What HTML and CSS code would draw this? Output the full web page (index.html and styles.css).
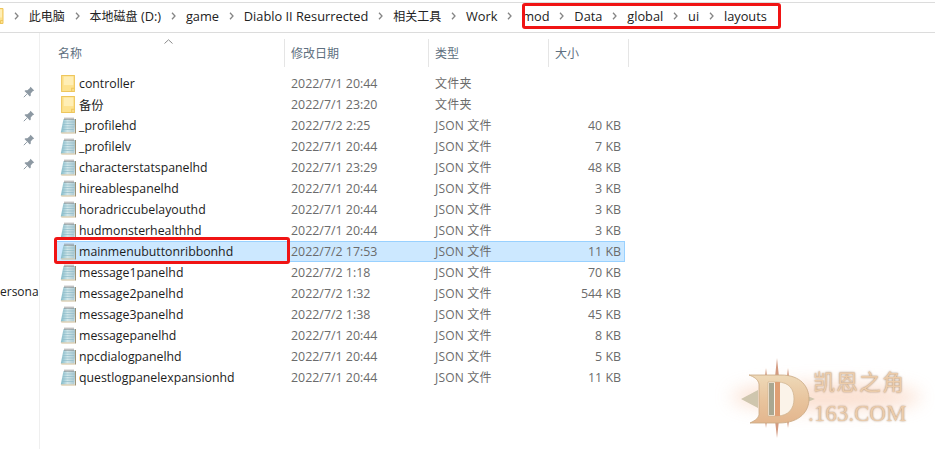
FILE: index.html
```html
<!DOCTYPE html>
<html lang="zh">
<head>
<meta charset="utf-8">
<title>layouts</title>
<link rel="stylesheet" href="styles.css">
</head>
<body>
<svg class="defs" width="0" height="0">
  <defs>
    <linearGradient id="pg" x1="0" y1="0" x2="1" y2="0">
      <stop offset="0" stop-color="#7fb9c8"/><stop offset="0.45" stop-color="#cfe6ea"/><stop offset="1" stop-color="#a9c6cf"/>
    </linearGradient>
    <linearGradient id="dg" x1="0" y1="0" x2="0" y2="1">
      <stop offset="0" stop-color="#eed9b8"/><stop offset="0.55" stop-color="#e8c39c"/><stop offset="1" stop-color="#e3b68e"/>
    </linearGradient>
    <symbol id="folder" viewBox="0 0 14 16">
      <path d="M1 .5h12v15H1z" fill="#fde28f" stroke="#eec65c"/>
      <path d="M3 1.500h9v8H3z" fill="#ffeeb5"/>
      <path d="M10.500 15.500v-3h2.500" fill="none" stroke="#eec65c"/>
    </symbol>
    <symbol id="note" viewBox="0 0 16 17">
      <path d="M3.500 2h12L14.500 15.500H.8z" fill="url(#pg)"/>
      <path d="M3.200 5h11.500M2.900 7.500h11.500M2.500 10h11.500M2.200 12.500h11.500" stroke="#8fbcc8" stroke-width=".7"/>
      <path d="M.8 15.500H15l-.2 1H1.500z" fill="#cdbb93"/>
      <path d="M5 .6v2.400M7 .6v2.400M9 .6v2.400M11 .6v2.400M13 .6v2.400" stroke="#777" stroke-width=".9"/>
      <path d="M15.500 2v14.500" stroke="#857653" stroke-width=".8"/>
    </symbol>
    <symbol id="pin" viewBox="0 0 12 12">
      <path d="M7.500.8l3.700 3.700-1.500.8-2 2.300.1 2L6.900 10.500 1.500 5.100 2.400 4.200l2 .1 2.300-2z" fill="#8d99a3"/>
      <path d="M3.800 8.200L.8 11.200" stroke="#8d99a3"/>
    </symbol>
    <symbol id="chev" viewBox="0 0 5 8">
      <path d="M1 .8L4 4 1 7.200" fill="none" stroke="#858585" stroke-width="1.300"/>
    </symbol>
  </defs>
</svg>

<div class="page">
  <nav class="crumbs">
    <svg class="crumb-folder"><use href="#folder"/></svg>
    <svg class="chev"><use href="#chev"/></svg><span class="cjk">此电脑</span>
    <svg class="chev"><use href="#chev"/></svg><span><span class="cjk">本地磁盘</span> (D:)</span>
    <svg class="chev"><use href="#chev"/></svg><span>game</span>
    <svg class="chev"><use href="#chev"/></svg><span>Diablo II Resurrected</span>
    <svg class="chev"><use href="#chev"/></svg><span class="cjk">相关工具</span>
    <svg class="chev"><use href="#chev"/></svg><span>Work</span>
    <svg class="chev"><use href="#chev"/></svg><span>mod</span>
    <svg class="chev"><use href="#chev"/></svg><span>Data</span>
    <svg class="chev"><use href="#chev"/></svg><span>global</span>
    <svg class="chev"><use href="#chev"/></svg><span>ui</span>
    <svg class="chev"><use href="#chev"/></svg><span>layouts</span>
  </nav>

  <div class="body">
    <aside class="side">
      <svg class="pin"><use href="#pin"/></svg>
      <svg class="pin"><use href="#pin"/></svg>
      <svg class="pin"><use href="#pin"/></svg>
      <svg class="pin"><use href="#pin"/></svg>
      <span class="side-label">ersona</span>
    </aside>

    <main class="list">
      <div class="head">
        <div class="hc c-name">名称<svg class="sort" viewBox="0 0 9 5"><path d="M.5 4.500L4.500 .8l4 3.700" fill="none" stroke="#8a8a8a"/></svg></div>
        <div class="hc c-date">修改日期</div>
        <div class="hc c-type">类型</div>
        <div class="hc c-size">大小</div>
      </div>

      <div class="row"><div class="c-name name"><svg class="ico"><use href="#folder"/></svg>controller</div><div class="c-date">2022/7/1 20:44</div><div class="c-type">文件夹</div><div class="c-size"></div></div>
      <div class="row"><div class="c-name name"><svg class="ico"><use href="#folder"/></svg>备份</div><div class="c-date">2022/7/1 23:20</div><div class="c-type">文件夹</div><div class="c-size"></div></div>
      <div class="row"><div class="c-name name"><svg class="ico"><use href="#note"/></svg>_profilehd</div><div class="c-date">2022/7/2 2:25</div><div class="c-type">JSON 文件</div><div class="c-size">40 KB</div></div>
      <div class="row"><div class="c-name name"><svg class="ico"><use href="#note"/></svg>_profilelv</div><div class="c-date">2022/7/1 20:44</div><div class="c-type">JSON 文件</div><div class="c-size">7 KB</div></div>
      <div class="row"><div class="c-name name"><svg class="ico"><use href="#note"/></svg>characterstatspanelhd</div><div class="c-date">2022/7/1 23:29</div><div class="c-type">JSON 文件</div><div class="c-size">48 KB</div></div>
      <div class="row"><div class="c-name name"><svg class="ico"><use href="#note"/></svg>hireablespanelhd</div><div class="c-date">2022/7/1 20:44</div><div class="c-type">JSON 文件</div><div class="c-size">3 KB</div></div>
      <div class="row"><div class="c-name name"><svg class="ico"><use href="#note"/></svg>horadriccubelayouthd</div><div class="c-date">2022/7/1 20:44</div><div class="c-type">JSON 文件</div><div class="c-size">3 KB</div></div>
      <div class="row"><div class="c-name name"><svg class="ico"><use href="#note"/></svg>hudmonsterhealthhd</div><div class="c-date">2022/7/1 20:44</div><div class="c-type">JSON 文件</div><div class="c-size">3 KB</div></div>
      <div class="row selected"><div class="c-name name"><svg class="ico"><use href="#note"/></svg>mainmenubuttonribbonhd</div><div class="c-date">2022/7/2 17:53</div><div class="c-type">JSON 文件</div><div class="c-size">11 KB</div></div>
      <div class="row"><div class="c-name name"><svg class="ico"><use href="#note"/></svg>message1panelhd</div><div class="c-date">2022/7/2 1:18</div><div class="c-type">JSON 文件</div><div class="c-size">70 KB</div></div>
      <div class="row"><div class="c-name name"><svg class="ico"><use href="#note"/></svg>message2panelhd</div><div class="c-date">2022/7/2 1:32</div><div class="c-type">JSON 文件</div><div class="c-size">544 KB</div></div>
      <div class="row"><div class="c-name name"><svg class="ico"><use href="#note"/></svg>message3panelhd</div><div class="c-date">2022/7/2 1:38</div><div class="c-type">JSON 文件</div><div class="c-size">45 KB</div></div>
      <div class="row"><div class="c-name name"><svg class="ico"><use href="#note"/></svg>messagepanelhd</div><div class="c-date">2022/7/1 20:44</div><div class="c-type">JSON 文件</div><div class="c-size">8 KB</div></div>
      <div class="row"><div class="c-name name"><svg class="ico"><use href="#note"/></svg>npcdialogpanelhd</div><div class="c-date">2022/7/1 20:44</div><div class="c-type">JSON 文件</div><div class="c-size">5 KB</div></div>
      <div class="row"><div class="c-name name"><svg class="ico"><use href="#note"/></svg>questlogpanelexpansionhd</div><div class="c-date">2022/7/1 20:44</div><div class="c-type">JSON 文件</div><div class="c-size">11 KB</div></div>
    </main>
  </div>

  <div class="mark mark-crumbs"></div>
  <div class="mark mark-row"></div>

  <div class="wm">
    <div class="wm-glow"></div>
    <svg class="wm-d" viewBox="0 0 74 80">
      <path d="M36 0l2.500 24h-5zM25 10l2 16h-4zM47 10l-2 16h4zM36 80l2.500-22h-5zM25 70l2-14h-4zM47 70l-2-14h4z" fill="#d39a80"/>
      <path d="M0 41l17-9v18zM74 41l-15-6v12z" fill="#cfc6ae"/>
      <path d="M8 17h32c20 0 28 12 28 24s-9 24-30 24H9c4-2 8-4 9-8V26c-1-5-5-7-10-9z" fill="url(#dg)" stroke="#c9a883" stroke-width=".8"/>
      <path d="M27 24h9c13 0 17 8 17 17s-5 17-17 17h-9z" fill="#fbf3e9" stroke="#d0b592" stroke-width=".8"/>
      <path d="M34 24h5v34h-5z" fill="#df9f74"/>
      <path d="M28 25h5v32h-5z" fill="#aaa791"/>
    </svg>
    <div class="wm-text">
      <div class="wm-cn">凯恩之角</div>
      <div class="wm-en">.163.COM</div>
    </div>
  </div>
</div>
</body>
</html>
```

FILE: styles.css
```css
* { box-sizing: border-box; }
html, body { margin: 0; padding: 0; background: #fff; }
body {
  width: 935px;
  height: 449px;
  overflow: hidden;
  font-family: "Open Sans", "Noto Sans CJK SC", sans-serif;
  font-size: 12px;
  color: #1c1c1c;
}
.defs { position: absolute; }
.page { position: relative; width: 935px; height: 449px; overflow: hidden; }

/* breadcrumb */
.crumbs {
  display: flex;
  align-items: center;
  gap: 9.900px;
  height: 31px;
  margin-top: 2px;
  padding-bottom: 4px;
  border-top: 1px solid #dcdcdc;
  border-bottom: 1px solid #dcdcdc;
  white-space: nowrap;
  font-size: 12.800px;
  color: #222;
}
.cjk { font-size: 12px; }
.crumb-folder { width: 14px; height: 16px; margin-left: -10px; flex: none; }
.chev { width: 5px; height: 8px; flex: none; }

/* main area */
.body { display: flex; height: 416px; }
.side {
  position: relative;
  width: 40px;
  flex: none;
  border-right: 1px solid #efefef;
  padding-top: 53px;
  padding-left: 23px;
  display: flex;
  flex-direction: column;
  gap: 12px;
}
.pin { width: 12px; height: 12px; flex: none; }
.side-label { position: absolute; left: 0; top: 250px; font-size: 12px; line-height: 18px; color: #222; }

.list { width: 590px; padding-left: 15px; padding-top: 6px; }
.head { display: flex; width: 574px; height: 28px; color: #5e6f80; }
.hc {
  position: relative;
  flex: none;
  display: flex;
  align-items: center;
  padding-left: 6px;
  border-right: 1px solid #e5e5e5;
  font-size: 12px;
}
.head .c-name { width: 230px; padding-left: 3px; }
.head .c-date { width: 144px; }
.head .c-type { width: 120px; }
.head .c-size { width: 80px; }
.sort { position: absolute; left: 109px; top: 0; width: 9px; height: 5px; }

.row {
  display: flex;
  align-items: center;
  width: 570px;
  height: 21px;
  font-size: 12.400px;
  color: #6b6b6b;
  white-space: nowrap;
}
.head + .row { margin-top: 6px; }
.row.selected { background: #cce8ff; box-shadow: inset 0 0 0 1px #99d1ff; }
.row .c-name { width: 230px; font-size: 12.300px; }
.row .c-date { width: 144px; padding-left: 6px; }
.row .c-type { width: 120px; padding-left: 6px; padding-bottom: 2px; font-size: 12px; letter-spacing: .2px; }
.row .c-size { width: 72px; text-align: right; }
.name { display: flex; align-items: center; padding-left: 5px; color: #1c1c1c; }
.ico { width: 16px; height: 17px; margin-right: 3px; flex: none; }

/* annotations */
.mark { position: absolute; border: 3px solid #f01414; border-radius: 3px; }
.mark-crumbs { left: 522px; top: 3px; width: 259px; height: 26px; }
.mark-row { left: 54px; top: 237px; width: 236px; height: 27px; }

/* watermark */
.wm { position: absolute; left: 741px; top: 358px; width: 165px; height: 80px; display: flex; align-items: center; filter: blur(.4px); }
.wm-glow {
  position: absolute;
  left: -10px;
  top: 26px;
  width: 190px;
  height: 26px;
  border-radius: 50%;
  background: #f8c9ae;
  opacity: .6;
  filter: blur(9px);
}
.wm-d { position: relative; width: 74px; height: 80px; flex: none; }
.wm-text { position: relative; margin-left: -7px; font-family: "Liberation Serif", "Noto Sans CJK SC", serif; color: #ecccaa; text-shadow: 0 0 2px #9a7a5c; line-height: 1; white-space: nowrap; }
.wm-cn { font-size: 22px; padding-left: 5px; letter-spacing: 1px; }
.wm-en { font-size: 23px; margin-top: 8px; }
```
